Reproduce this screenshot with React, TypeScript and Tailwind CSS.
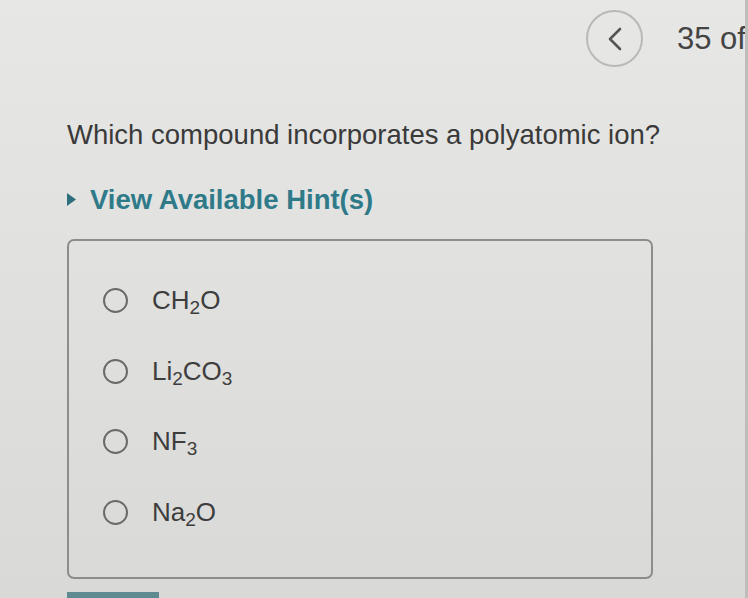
import React from "react";

const options = [
  { id: "a", parts: ["CH", "2", "O"] },
  { id: "b", parts: ["Li", "2", "CO", "3"] },
  { id: "c", parts: ["NF", "3"] },
  { id: "d", parts: ["Na", "2", "O"] },
];

function Formula({ parts }: { parts: string[] }) {
  return (
    <span>
      {parts.map((p, i) =>
        i % 2 === 1 ? (
          <span key={i} className="relative top-[5px] text-[19px]">
            {p}
          </span>
        ) : (
          <span key={i}>{p}</span>
        )
      )}
    </span>
  );
}

export default function App() {
  return (
    <div
      className="w-[748px] h-[598px] overflow-hidden bg-gradient-to-b from-[#e7e7e5] to-[#d9d9d7] text-[#3b3b3b] flex"
      style={{ fontFamily: '"Liberation Sans", Arial, sans-serif' }}
    >
      <div className="flex-1 flex flex-col pl-[67px]">
        {/* top nav */}
        <div className="flex items-center justify-end h-[58px] mt-[10px] -mr-[6px]">
          <button className="w-[57px] h-[57px] rounded-full border-2 border-[#b9b9b9] flex items-center justify-center">
            <svg width="18" height="26" viewBox="0 0 18 26" fill="none">
              <path d="M14 3L4 13l10 10" stroke="#555" strokeWidth="2.6" strokeLinecap="round" strokeLinejoin="round" />
            </svg>
          </button>
          <span className="ml-[34px] text-[31px] text-[#444] whitespace-nowrap w-[74px]">35 of</span>
        </div>

        <p className="mt-[51px] text-[27.5px] leading-[32px] text-[#3a3a3a]">
          Which compound incorporates a polyatomic ion?
        </p>

        <div className="mt-[33px] flex items-center gap-[14px] text-[#2f7a89] font-bold text-[27.5px] leading-[32px]">
          <svg width="9" height="13" viewBox="0 0 9 13">
            <path d="M0 0L9 6.5L0 13Z" fill="#2f6f7d" />
          </svg>
          <span>View Available Hint(s)</span>
        </div>

        <div className="mt-[23px] w-[586px] h-[342px] border-2 border-[#8d8d8b] rounded-[7px] pt-[45px] pl-[34px] flex flex-col gap-[40px]">
          {options.map((o) => (
            <label key={o.id} className="flex items-center gap-[24px] h-[30.5px] text-[26px] text-[#3d3d3d]">
              <span className="w-[25px] h-[25px] rounded-full border-[2.5px] border-[#6a6a6a]" />
              <Formula parts={o.parts} />
            </label>
          ))}
        </div>

        <div className="mt-[13px] w-[92px] h-[6px] bg-[#5f8a90]" />
      </div>
      <div className="w-[3px] bg-[#bdbdbb]" />
    </div>
  );
}
